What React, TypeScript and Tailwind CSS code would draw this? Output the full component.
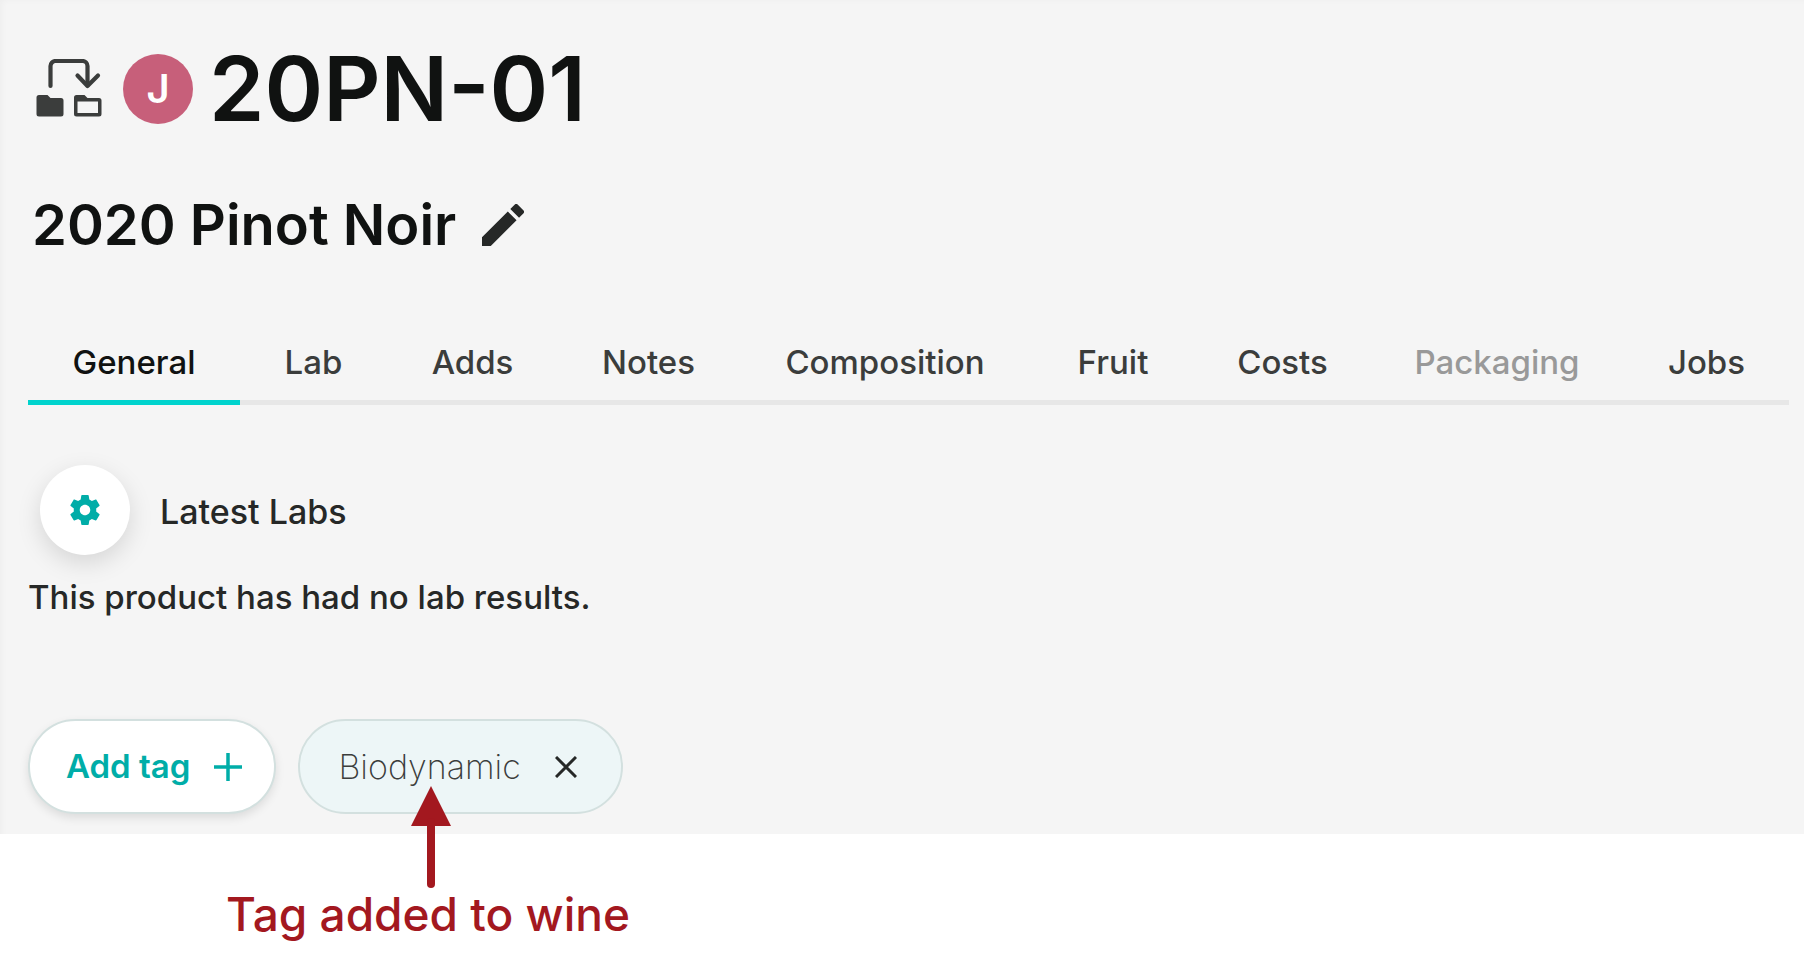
import React from "react";

const tabs = [
  { label: "General", active: true },
  { label: "Lab" },
  { label: "Adds" },
  { label: "Notes" },
  { label: "Composition" },
  { label: "Fruit" },
  { label: "Costs" },
  { label: "Packaging", disabled: true },
  { label: "Jobs" },
];

function MoveIcon() {
  return (
    <svg viewBox="0 0 68 60" className="h-[60px] w-[68px]" fill="none" stroke="#3b3d3c" aria-hidden="true">
      <path d="M14.500 27V7a5 5 0 0 1 5-5H46.500a5 5 0 0 1 5 5V26" strokeWidth="4.200" strokeLinecap="round" />
      <path d="M41.500 16.500L51.500 27L62 16.500" strokeWidth="4.200" strokeLinecap="round" strokeLinejoin="round" />
      <path d="M3 36h8.500l3 3h10.500a2.500 2.500 0 0 1 2.500 2.500v13.500a2.500 2.500 0 0 1-2.500 2.500H3a2.500 2.500 0 0 1-2.500-2.500V38.500a2.500 2.500 0 0 1 2.500-2.500z" fill="#3b3d3c" stroke="none" />
      <path
        fillRule="evenodd"
        d="M40.500 36h8l3 3h11.500a2.500 2.500 0 0 1 2.500 2.500v13.500a2.500 2.500 0 0 1-2.500 2.500H40.500a2.500 2.500 0 0 1-2.500-2.500V38.500a2.500 2.500 0 0 1 2.500-2.500zM41.500 42.500v11.500h20.500v-11.500z"
        fill="#3b3d3c"
        stroke="none"
      />
    </svg>
  );
}

export default function App() {
  return (
    <div className="min-h-screen bg-white font-['Inter',sans-serif] text-[#262827]">
      <main className="bg-[#f5f5f5] pt-[54px] pr-[15px] pb-5 pl-7 shadow-[inset_6px_4px_6px_-4px_rgba(0,0,0,0.03)]">
        <header className="pl-1">
          <div className="flex h-[70px] items-center pl-1">
            <MoveIcon />
            <span className="ml-[19px] flex size-[70px] items-center justify-center rounded-full bg-[#c75f7a] text-[40px] font-semibold text-white">
              J
            </span>
            <h1 className="ml-4 text-[89px] leading-[66px] font-semibold text-[#101211]">20PN-01</h1>
          </div>
          <div className="mt-[69px] flex h-16 items-center gap-[26px]">
            <h2 className="text-[56px] leading-[64px] font-semibold text-[#101211]">2020 Pinot Noir</h2>
            <button type="button" aria-label="Edit name">
              <svg viewBox="3 3 18 18" className="size-[42px]" fill="#262827" aria-hidden="true">
                <path d="M3 17.250V21h3.750L17.810 9.940l-3.750-3.750L3 17.250zM20.710 7.040a1 1 0 0 0 0-1.410l-2.340-2.340a1 1 0 0 0-1.410 0l-1.830 1.830 3.750 3.750 1.830-1.830z" />
              </svg>
            </button>
          </div>
        </header>

        <nav className="mt-[75px] grid grid-cols-[212fr_147fr_171fr_181fr_292fr_164fr_175fr_254fr_165fr]">
          {tabs.map((tab) => (
            <button
              key={tab.label}
              type="button"
              disabled={tab.disabled}
              className={
                "border-b-[5px] pb-2 text-[33px] leading-[60px] font-medium whitespace-nowrap " +
                (tab.active
                  ? "border-[#00d3cd] text-[#101211]"
                  : tab.disabled
                    ? "border-[#e7e7e7] text-[#999]"
                    : "border-[#e7e7e7] text-[#3b3d3c]")
              }
            >
              {tab.label}
            </button>
          ))}
        </nav>

        <section>
          <div className="mt-[60px] flex items-center gap-[30px] pl-3">
            <button
              type="button"
              aria-label="Lab settings"
              className="flex size-[90px] items-center justify-center rounded-full bg-white shadow-[0_8px_24px_rgba(0,0,0,0.13)]"
            >
              <svg viewBox="0 0 24 24" className="size-9" fill="#00ada8" aria-hidden="true">
                <path d="M19.430 12.980c.04-.32.07-.64.07-.98s-.03-.66-.07-.98l2.110-1.650c.19-.15.24-.42.12-.64l-2-3.460c-.12-.22-.39-.3-.61-.22l-2.490 1c-.52-.4-1.080-.73-1.690-.98l-.38-2.650C14.460 2.180 14.250 2 14 2h-4c-.25 0-.46.18-.49.42l-.38 2.650c-.61.25-1.170.59-1.690.98l-2.490-1c-.23-.09-.49 0-.61.22l-2 3.460c-.13.22-.07.49.12.64l2.110 1.650c-.04.32-.07.65-.07.98s.03.66.07.98l-2.110 1.650c-.19.15-.24.42-.12.64l2 3.460c.12.22.39.3.61.22l2.490-1c.52.4 1.080.73 1.690.98l.38 2.650c.03.24.24.42.49.42h4c.25 0 .46-.18.49-.42l.38-2.650c.61-.25 1.170-.59 1.690-.98l2.490 1c.23.09.49 0 .61-.22l2-3.460c.12-.22.07-.49-.12-.64l-2.110-1.650zM12 15.500c-1.930 0-3.500-1.570-3.500-3.500s1.570-3.500 3.500-3.500 3.500 1.570 3.500 3.500-1.570 3.500-3.500 3.500z" />
              </svg>
            </button>
            <h3 className="pt-0.5 text-[34px] font-medium">Latest Labs</h3>
          </div>
          <p className="mt-5 text-[33px] leading-[44px] font-medium">This product has had no lab results.</p>
        </section>

        <div className="mt-[100px] flex gap-[22px]">
          <button
            type="button"
            className="flex h-[95px] items-center gap-6 rounded-full border-2 border-[#d3e0df] bg-white pr-8 pl-9 text-[33px] font-semibold text-[#00ada8] shadow-[0_4px_10px_rgba(0,0,0,0.1)]"
          >
            Add tag
            <svg viewBox="0 0 28 28" className="size-7" stroke="#00ada8" strokeWidth="3.500" aria-hidden="true">
              <path d="M14 0V28M0 14H28" />
            </svg>
          </button>
          <div className="relative flex h-[95px] items-center gap-[34px] rounded-full border-2 border-[#d3e0df] bg-[#edf6f7] pr-11 pl-[38px]">
            <span className="text-[34px] font-extralight text-[#3b3d3c]">Biodynamic</span>
            <button type="button" aria-label="Remove Biodynamic tag">
              <svg viewBox="0 0 22 22" className="size-[22px]" stroke="#262827" strokeWidth="3" aria-hidden="true">
                <path d="M1 1L21 21M21 1L1 21" />
              </svg>
            </button>
            <svg viewBox="0 0 40 102" className="absolute top-[65px] left-[111px] h-[102px] w-10" aria-hidden="true">
              <path d="M20 0L40 40H0z" fill="#a3181f" />
              <path d="M20 36V98" stroke="#a3181f" strokeWidth="8" strokeLinecap="round" />
            </svg>
          </div>
        </div>
      </main>
      <p className="pt-[52px] pl-[226px] text-[46px] leading-[56px] font-medium text-[#a3181f]">Tag added to wine</p>
    </div>
  );
}
